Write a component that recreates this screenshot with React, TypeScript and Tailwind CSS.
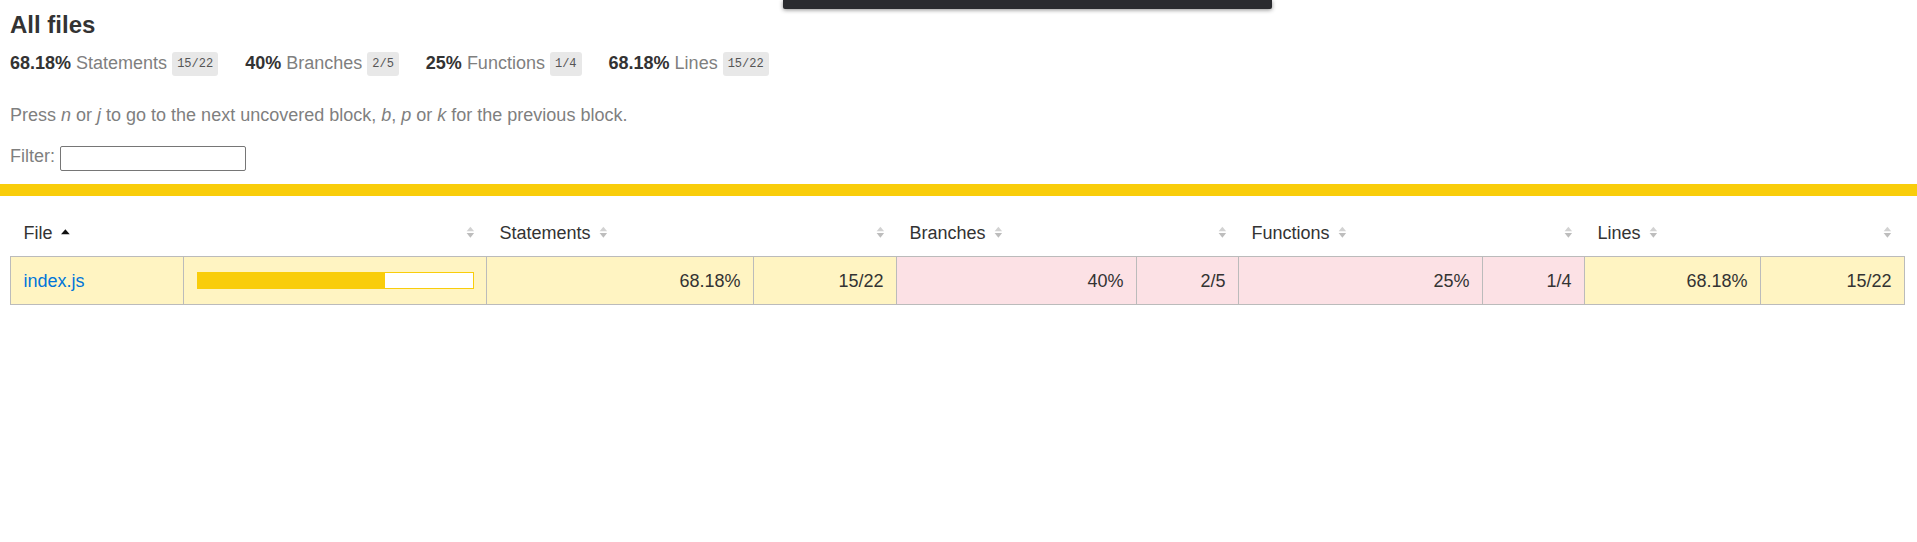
import React from "react";

type Level = "medium" | "low";

const bgFor: Record<Level, string> = {
  medium: "bg-[#fff4c2]",
  low: "bg-[#fce1e5]",
};

const summary = [
  { pct: "68.18%", label: "Statements", frac: "15/22" },
  { pct: "40%", label: "Branches", frac: "2/5" },
  { pct: "25%", label: "Functions", frac: "1/4" },
  { pct: "68.18%", label: "Lines", frac: "15/22" },
];

const metrics: { label: string; pct: string; frac: string; level: Level }[] = [
  { label: "Statements", pct: "68.18%", frac: "15/22", level: "medium" },
  { label: "Branches", pct: "40%", frac: "2/5", level: "low" },
  { label: "Functions", pct: "25%", frac: "1/4", level: "low" },
  { label: "Lines", pct: "68.18%", frac: "15/22", level: "medium" },
];

const cols =
  "grid grid-cols-[173px_303px_267px_143px_240px_102px_244px_102px_176px_143px]";

function Sorter({ sorted = false }: { sorted?: boolean }) {
  return (
    <svg
      viewBox="0 0 7 10"
      preserveAspectRatio="none"
      className="inline-block align-baseline w-[8.75px] h-[12.5px] ml-[8.75px]"
    >
      {sorted ? (
        <polygon points="0,6.6 3.5,2.6 7,6.6" fill="#111" />
      ) : (
        <>
          <polygon points="0.5,4.2 3.5,0.6 6.5,4.2" fill="#d2d2d2" />
          <polygon points="0.5,5.6 3.5,9.4 6.5,5.6" fill="#bdbdbd" />
        </>
      )}
    </svg>
  );
}

export default function App() {
  return (
    <div className="relative min-h-screen bg-white text-[#333] text-[18px] leading-[20px] font-['Liberation_Sans',Arial,sans-serif]">
      {/* overlay strip at the top */}
      <div className="absolute left-[783px] top-0 w-[489px] h-[9px] bg-[#2a2b2f] rounded-b-[2px] shadow-[0_1px_4px_rgba(0,0,0,0.45)]" />

      <div className="px-[10px] pt-[11px]">
        <h1 className="text-[24px] leading-[28px] font-bold">All files</h1>

        <div className="flex mt-[14px]">
          {summary.map((s) => (
            <div key={s.label} className="pr-[27px] whitespace-nowrap">
              <span className="font-bold">{s.pct + " "}</span>
              <span className="text-[#7f7f7f]">{s.label}</span>{" "}
              <span className="align-middle text-[12px] leading-[14px] font-['Liberation_Mono',monospace] text-[#555] bg-[#e8e8e8] px-[5px] py-[5px] rounded-[3px]">
                {s.frac}
              </span>
            </div>
          ))}
        </div>

        <p className="mt-[31.5px] text-[#7f7f7f]">
          Press <em>n</em> or <em>j</em> to go to the next uncovered block,{" "}
          <em>b</em>, <em>p</em> or <em>k</em> for the previous block.
        </p>

        <div className="mt-[21px] flex items-start text-[#7f7f7f]">
          <span>Filter:</span>
          <input
            type="search"
            className="ml-[5px] w-[186px] h-[25px] border border-[#767676] rounded-[2px] bg-white"
          />
        </div>
      </div>

      <div className="mt-[13.5px] h-[12px] bg-[#f9cd0b]" />

      <div className="pl-[10px] pr-[12px] pt-[13px]">
        <div className={cols + " px-[1px]"}>
          <div className="px-[12.5px] py-[13.5px] whitespace-nowrap">
            File
            <Sorter sorted />
          </div>
          <div className="px-[12.5px] py-[13.5px] text-right">
            <Sorter />
          </div>
          {metrics.map((m) => (
            <React.Fragment key={m.label}>
              <div className="px-[12.5px] py-[13.5px] whitespace-nowrap">
                {m.label}
                <Sorter />
              </div>
              <div className="px-[12.5px] py-[13.5px] text-right">
                <Sorter />
              </div>
            </React.Fragment>
          ))}
        </div>

        <div className={cols + " border border-[#bbb]"}>
          <div className="bg-[#fff4c2] border-r border-[#bbb] px-[12.5px] py-[13.5px]">
            <a href="#" className="text-[#0074d9]">
              index.js
            </a>
          </div>
          <div className="bg-[#fff4c2] border-r border-[#bbb] px-[12.5px] flex items-center">
            <div className="flex w-full h-[17px] border border-[#f9cd0b]">
              <div className="w-[68%] bg-[#f9cd0b]" />
              <div className="flex-1 bg-white" />
            </div>
          </div>
          {metrics.map((m, i) => (
            <React.Fragment key={m.label}>
              <div
                className={`${bgFor[m.level]} border-r border-[#bbb] px-[12.5px] py-[13.5px] text-right`}
              >
                {m.pct}
              </div>
              <div
                className={`${bgFor[m.level]} ${
                  i < metrics.length - 1 ? "border-r border-[#bbb]" : ""
                } px-[12.5px] py-[13.5px] text-right`}
              >
                {m.frac}
              </div>
            </React.Fragment>
          ))}
        </div>
      </div>
    </div>
  );
}
